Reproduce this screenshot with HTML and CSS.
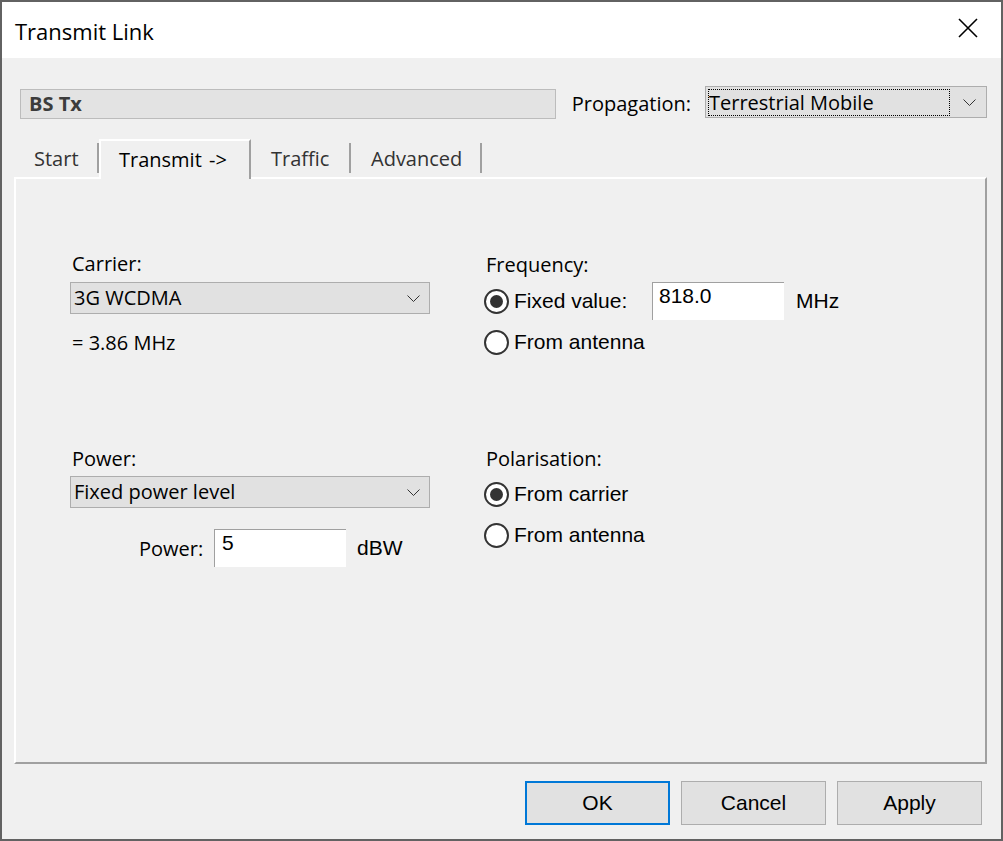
FILE: index.html
```html
<!DOCTYPE html>
<html>
<head>
<meta charset="utf-8">
<title>Transmit Link</title>
<link rel="stylesheet" href="styles.css">
</head>
<body>
<div class="window">
  <div class="titlebar">
    <span class="title">Transmit Link</span>
    <svg class="close" width="20" height="20" viewBox="0 0 20 20"><path d="M1 1 L19 19 M19 1 L1 19" stroke="#000" stroke-width="1.6" fill="none"/></svg>
  </div>
  <div class="body">
    <div class="header">
      <div class="namefield">BS Tx</div>
      <span class="prop-label">Propagation:</span>
      <div class="combo combo-prop">
        <span class="focus">Terrestrial Mobile</span>
        <svg class="chev" width="13" height="7" viewBox="0 0 13 7"><path d="M0.5 0.5 L6.5 6.5 L12.5 0.5" stroke="#333" stroke-width="1" fill="none"/></svg>
      </div>
    </div>
    <div class="tabs">
      <div class="tab tab-start">Start</div>
      <div class="tab tab-sel">Transmit -&gt;</div>
      <div class="tab tab-traffic">Traffic</div>
      <div class="tab tab-adv">Advanced</div>
    </div>
    <div class="panel">
      <div class="grid">
        <div class="cell">
          <div class="label">Carrier:</div>
          <div class="combo combo-field combo-carrier">
            <span class="combo-text">3G WCDMA</span>
            <svg class="chev" width="13" height="7" viewBox="0 0 13 7"><path d="M0.5 0.5 L6.5 6.5 L12.5 0.5" stroke="#333" stroke-width="1" fill="none"/></svg>
          </div>
          <div class="label bw">= 3.86 MHz</div>
        </div>
        <div class="cell">
          <div class="label label-r">Frequency:</div>
          <div class="radio-row first">
            <span class="radio checked"></span>
            <span class="rlabel fixed">Fixed value:</span>
            <span class="textbox tb-freq">818.0</span>
            <span class="unit unit-mhz">MHz</span>
          </div>
          <div class="radio-row">
            <span class="radio"></span>
            <span class="rlabel">From antenna</span>
          </div>
        </div>
        <div class="cell">
          <div class="label">Power:</div>
          <div class="combo combo-field combo-power">
            <span class="combo-text">Fixed power level</span>
            <svg class="chev" width="13" height="7" viewBox="0 0 13 7"><path d="M0.5 0.5 L6.5 6.5 L12.5 0.5" stroke="#333" stroke-width="1" fill="none"/></svg>
          </div>
          <div class="power-row">
            <span class="plabel">Power:</span>
            <span class="textbox tb-power">5</span>
            <span class="unit unit-dbw">dBW</span>
          </div>
        </div>
        <div class="cell">
          <div class="label">Polarisation:</div>
          <div class="radio-row first2">
            <span class="radio checked"></span>
            <span class="rlabel">From carrier</span>
          </div>
          <div class="radio-row">
            <span class="radio"></span>
            <span class="rlabel">From antenna</span>
          </div>
        </div>
      </div>
    </div>
    <div class="buttons">
      <button class="btn btn-ok">OK</button>
      <button class="btn">Cancel</button>
      <button class="btn">Apply</button>
    </div>
  </div>
</div>
</body>
</html>
```
FILE: styles.css
```css
html, body {
  margin: 0;
  padding: 0;
}
body {
  background: #f0f0f0;
  font-family: "Open Sans", "Noto Sans", sans-serif;
  color: #000;
}
.window {
  width: 1003px;
  height: 841px;
  box-sizing: border-box;
  border: 2px solid #626262;
  display: flex;
  flex-direction: column;
  overflow: hidden;
}
.titlebar {
  height: 56px;
  flex: none;
  background: #fff;
  display: flex;
  align-items: center;
  justify-content: space-between;
  padding: 0 23px 0 13px;
}
.title {
  font-size: 22px;
  line-height: 30px;
  margin-top: 2px;
}
.close {
  display: block;
  margin-top: -4px;
}
.body {
  flex: 1;
  background: #f0f0f0;
  display: flex;
  flex-direction: column;
}
.header {
  margin-top: 28px;
  height: 32px;
  padding: 0 14px 0 18px;
  display: flex;
  align-items: flex-start;
}
.namefield {
  flex: 1;
  height: 30px;
  margin-top: 3px;
  box-sizing: border-box;
  border: 1px solid #bcbcbc;
  background: #e3e3e3;
  font-weight: bold;
  font-size: 20px;
  line-height: 28px;
  padding-left: 8px;
  color: #3c3c3c;
}
.prop-label {
  margin: 3px 14px 0 16px;
  font-size: 20px;
  line-height: 30px;
}
.combo {
  box-sizing: border-box;
  height: 32px;
  border: 1px solid #adadad;
  background: #e1e1e1;
  display: flex;
  align-items: center;
  justify-content: space-between;
  font-size: 20px;
}
.combo-prop {
  width: 282px;
  flex: none;
  padding-left: 2px;
  padding-right: 10px;
}
.focus {
  box-sizing: border-box;
  width: 242px;
  height: 27px;
  border: 1px dotted #000;
  line-height: 25px;
  padding-left: 0;
  margin-top: 1px;
}
.chev {
  display: block;
  flex: none;
}
.tabs {
  margin: 21px 0 0 13px;
  height: 38px;
  display: flex;
  align-items: flex-end;
}
.tab {
  box-sizing: border-box;
  font-size: 20px;
  flex: none;
}
.tab-start, .tab-traffic, .tab-adv {
  height: 30px;
  margin-bottom: 4px;
  border-right: 2px solid #a0a0a0;
  padding-top: 2px;
  line-height: 28px;
  color: #333;
}
.tab-start {
  width: 84px;
  padding-left: 19px;
}
.tab-traffic {
  width: 100px;
  padding-left: 20px;
}
.tab-adv {
  width: 131px;
  padding-left: 20px;
}
.tab-sel {
  width: 152px;
  height: 40px;
  margin-bottom: -2px;
  position: relative;
  z-index: 1;
  background: #f0f0f0;
  border-top: 2px solid #fff;
  border-left: 2px solid #fff;
  border-right: 2px solid #a0a0a0;
  padding-left: 18px;
  padding-top: 4px;
  line-height: 29px;
  word-spacing: 2px;
}
.panel {
  margin: 0 14px 0 12px;
  height: 587px;
  box-sizing: border-box;
  border-top: 2px solid #fff;
  border-left: 2px solid #fff;
  border-right: 2px solid #a0a0a0;
  border-bottom: 2px solid #a0a0a0;
}
.grid {
  padding: 72px 0 0 54px;
  display: grid;
  grid-template-columns: 360px 1fr;
  grid-template-rows: 195px auto;
  column-gap: 54px;
}
.cell {
  display: flex;
  flex-direction: column;
  align-items: flex-start;
}
.label {
  font-size: 20px;
  line-height: 26px;
  height: 26px;
  padding-left: 2px;
}
.label-r {
  margin-top: 1px;
}
.combo-field {
  width: 360px;
  margin-top: 5px;
  padding-left: 3px;
  padding-right: 9px;
}
.combo-power {
  margin-top: 4px;
}
.combo-text {
  line-height: 30px;
}
.bw {
  margin-top: 16px;
}
.radio-row {
  height: 38px;
  display: flex;
  align-items: center;
  margin-top: 3px;
  font-family: "Liberation Sans", Arial, sans-serif;
  font-size: 21px;
}
.radio-row.first {
  margin-top: 4px;
}
.radio {
  width: 25px;
  height: 25px;
  box-sizing: border-box;
  border: 2px solid #333;
  border-radius: 50%;
  background: #fff;
  display: flex;
  align-items: center;
  justify-content: center;
  margin-right: 5px;
  flex: none;
}
.radio.checked::after {
  content: "";
  width: 13px;
  height: 13px;
  border-radius: 50%;
  background: #333;
}
.rlabel {
  white-space: nowrap;
}
.rlabel.fixed {
  width: 138px;
}
.textbox {
  box-sizing: border-box;
  width: 132px;
  height: 38px;
  background: #fff;
  border-top: 1px solid #a0a0a0;
  border-left: 1px solid #a0a0a0;
  font-family: "Liberation Sans", Arial, sans-serif;
  font-size: 21px;
  line-height: 26px;
  padding-left: 6px;
  align-self: stretch;
}
.unit {
  font-family: "Liberation Sans", Arial, sans-serif;
  font-size: 21px;
}
.unit-mhz {
  margin-left: 12px;
}
.power-row {
  margin-top: 21px;
  height: 38px;
  display: flex;
  align-items: center;
  padding-left: 69px;
}
.plabel {
  font-size: 20px;
  width: 75px;
}
.tb-power {
  padding-left: 7px;
}
.unit-dbw {
  margin-left: 11px;
}
.buttons {
  margin-top: 17px;
  display: flex;
  justify-content: flex-end;
  gap: 11px;
  padding-right: 19px;
}
.btn {
  width: 145px;
  height: 44px;
  box-sizing: border-box;
  border: 1px solid #adadad;
  background: #e1e1e1;
  font-family: "Liberation Sans", Arial, sans-serif;
  font-size: 21px;
  color: #000;
  padding: 0;
  margin: 0;
}
.btn-ok {
  border: 2px solid #0078d7;
}
```
